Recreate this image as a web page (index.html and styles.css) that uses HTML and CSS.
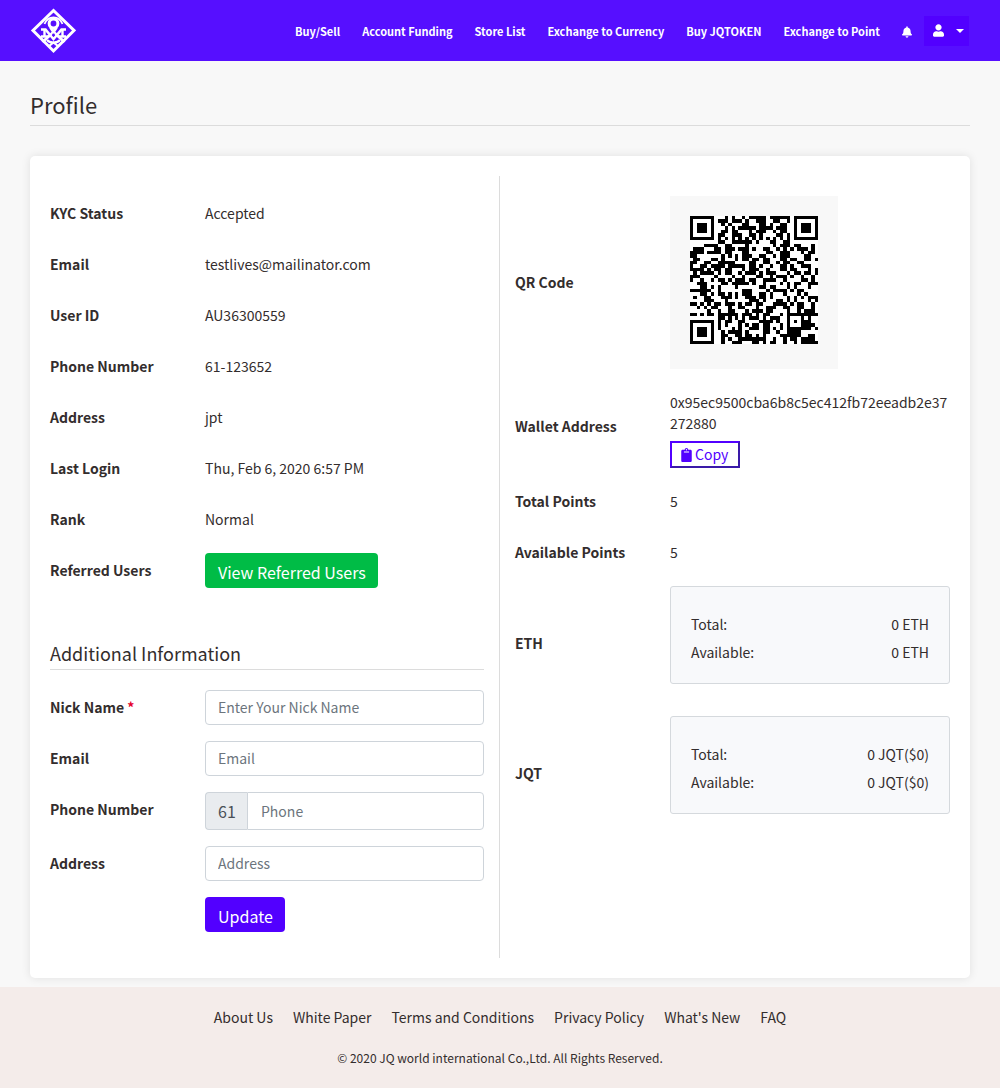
FILE: index.html
```html
<!DOCTYPE html>
<html lang="en">
<head>
<meta charset="utf-8">
<title>Profile</title>
<link rel="stylesheet" href="styles.css">
</head>
<body>
<header class="topbar">
  <a class="logo" aria-label="Home">
    <svg width="46" height="46" viewBox="0 0 46 46" fill="none" stroke="#fff">
      <path d="M23.500 2.500 44 22.500 23.500 43 3 22.500Z" stroke-width="3"/>
      <circle cx="23.500" cy="15.500" r="4.400" stroke-width="3"/>
      <path d="M14.500 16Q17 9.500 23.500 9.500T32.500 16" stroke-width="1.800"/>
      <path d="M20.500 19.500 23.500 24 34.500 34M26.500 19.500 23.500 24 12.500 34" stroke-width="2.800"/>
      <path d="M11 21.500H15.500L23.500 31 31.500 21.500H36" stroke-width="2.600"/>
      <path d="M14.500 21V29M32.500 21V29M11 28.500H19M28 28.500H36" stroke-width="2.400"/>
      <path d="M17 32Q19 34.500 23.500 34.500T30 32M18.500 38.500 23.500 34.500 28.500 38.500" stroke-width="2.200"/>
      <circle cx="23.500" cy="27" r="1.400" fill="#560fff" stroke="none"/>
    </svg>
  </a>
  <nav class="nav">
    <a>Buy/Sell</a><a>Account Funding</a><a>Store List</a><a>Exchange to Currency</a><a>Buy JQTOKEN</a><a>Exchange to Point</a>
    <a class="bell"><svg width="10" height="12" viewBox="0 0 448 512" fill="#fff"><path d="M224 512c35.320 0 63.970-28.650 63.970-64H160.030c0 35.350 28.650 64 63.970 64zm215.390-149.710c-19.320-20.760-55.470-51.990-55.470-154.290 0-77.700-54.480-139.900-127.940-155.160V32c0-17.670-14.320-32-31.980-32s-31.980 14.330-31.980 32v20.840C118.560 68.100 64.080 130.300 64.080 208c0 102.300-36.150 133.530-55.470 154.290-6 6.450-8.660 14.160-8.610 21.710.110 16.400 12.980 32 32.100 32h383.800c19.120 0 32-15.600 32.100-32 .050-7.550-2.610-15.270-8.610-21.710z"/></svg></a>
  </nav>
  <button class="user-menu" aria-label="Account">
    <svg width="11" height="13" viewBox="0 0 448 512" fill="#fff"><path d="M224 256c70.700 0 128-57.300 128-128S294.700 0 224 0 96 57.300 96 128s57.300 128 128 128zm89.600 32h-16.700c-22.200 10.200-46.900 16-72.900 16s-50.600-5.800-72.900-16h-16.700C60.200 288 0 348.200 0 422.400V464c0 26.500 21.500 48 48 48h352c26.500 0 48-21.500 48-48v-41.600c0-74.200-60.200-134.400-134.400-134.400z"/></svg>
    <span class="caret"></span>
  </button>
</header>

<main class="page">
  <h1 class="page-title">Profile</h1>
  <section class="card">
    <div class="col col-left">
      <div class="row"><b>KYC Status</b><span>Accepted</span></div>
      <div class="row"><b>Email</b><span>testlives@mailinator.com</span></div>
      <div class="row"><b>User ID</b><span>AU36300559</span></div>
      <div class="row"><b>Phone Number</b><span>61-123652</span></div>
      <div class="row"><b>Address</b><span>jpt</span></div>
      <div class="row"><b>Last Login</b><span>Thu, Feb 6, 2020 6:57 PM</span></div>
      <div class="row"><b>Rank</b><span>Normal</span></div>
      <div class="row"><b>Referred Users</b><span><button class="btn btn-green">View Referred Users</button></span></div>

      <h2 class="section-title">Additional Information</h2>
      <form>
        <div class="row"><b>Nick Name <i class="required">*</i></b><input class="field" placeholder="Enter Your Nick Name"></div>
        <div class="row"><b>Email</b><input class="field" placeholder="Email"></div>
        <div class="row row-phone"><b>Phone Number</b><div class="group"><span class="addon">61</span><input class="field" placeholder="Phone"></div></div>
        <div class="row"><b>Address</b><input class="field" placeholder="Address"></div>
        <div class="row"><b></b><span><button type="button" class="btn btn-primary">Update</button></span></div>
      </form>
    </div>

    <div class="col col-right">
      <div class="row"><b>QR Code</b><div><div class="qr"><svg id="qr" width="128" height="128" viewBox="0 0 128 128"></svg></div></div></div>
      <div class="row"><b>Wallet Address</b>
        <div class="wallet">
          <div id="wallet-address">0x95ec9500cba6b8c5ec412fb72eeadb2e37272880</div>
          <button class="copy"><svg width="11" height="14" viewBox="0 0 384 512" fill="#5200ff"><path d="M384 112v352c0 26.510-21.490 48-48 48H48c-26.510 0-48-21.490-48-48V112c0-26.510 21.490-48 48-48h80c0-35.290 28.710-64 64-64s64 28.710 64 64h80c26.510 0 48 21.490 48 48zM192 40c-13.255 0-24 10.745-24 24s10.745 24 24 24 24-10.745 24-24-10.745-24-24-24m96 114v-20a6 6 0 0 0-6-6H102a6 6 0 0 0-6 6v20a6 6 0 0 0 6 6h180a6 6 0 0 0 6-6z"/></svg><span>Copy</span></button>
        </div>
      </div>
      <div class="row"><b>Total Points</b><span>5</span></div>
      <div class="row"><b>Available Points</b><span>5</span></div>
      <div class="row"><b>ETH</b><div class="balance"><p><span>Total:</span><span>0 ETH</span></p><p><span>Available:</span><span>0 ETH</span></p></div></div>
      <div class="row"><b>JQT</b><div class="balance"><p><span>Total:</span><span>0 JQT($0)</span></p><p><span>Available:</span><span>0 JQT($0)</span></p></div></div>
    </div>
  </section>
</main>

<footer class="footer">
  <nav class="footer-links"><a>About Us</a><a>White Paper</a><a>Terms and Conditions</a><a>Privacy Policy</a><a>What's New</a><a>FAQ</a></nav>
  <p class="copyright">© 2020 JQ world international Co.,Ltd. All Rights Reserved.</p>
</footer>
<script src="qr.js"></script>
</body>
</html>
```
FILE: styles.css
```css
* { box-sizing: border-box; }
body {
  margin: 0;
  background: #f8f8f8;
  color: #332d2d;
  font: 14px/21px "Noto Sans CJK KR", "Noto Sans", sans-serif;
}
button, input { font-family: inherit; margin: 0; }
h1, h2, p { margin: 0; font-weight: 400; }

.topbar {
  display: flex;
  align-items: center;
  height: 61px;
  padding: 0 31px 0 30px;
  background: #560fff;
}
.logo { display: flex; }
.nav { display: flex; gap: 22px; margin-left: auto; padding-top: 1px; }
.nav a { color: #fff; font-size: 11px; font-weight: 700; line-height: 20px; }
.nav .bell { display: flex; align-items: center; padding-top: 1px; }
.user-menu {
  display: flex;
  align-items: center;
  justify-content: space-between;
  width: 45px;
  height: 30px;
  margin-left: 12px;
  padding: 0 5px 0 9px;
  border: 0;
  background: #5200ff;
}
.caret { border: 4px solid transparent; border-top-color: #fff; border-bottom: 0; }

.page { padding: 30px 30px 9px; }
.page-title {
  height: 35px;
  margin-bottom: 30px;
  border-bottom: 1px solid #dcdcdc;
  font-size: 22px;
  line-height: 26px;
}
.card {
  display: flex;
  height: 822px;
  padding: 20px;
  border-radius: 5px;
  background: #fff;
  box-shadow: 0 0 10px rgba(0, 0, 0, .1);
}
.col { width: 450px; padding-top: 20px; }
.col-left { padding-right: 15px; border-right: 1px solid #dcdcdc; }
.col-right { padding-left: 15px; }
.row {
  display: grid;
  grid-template-columns: 155px minmax(0, 1fr);
  align-items: center;
  min-height: 35px;
  margin-bottom: 16px;
}
.row b { font-weight: 700; }
.required { color: #e5002b; font-style: normal; }

.btn {
  display: block;
  height: 35px;
  padding: 3px 0 0 13px;
  border: 0;
  border-radius: 4px;
  color: #fff;
  font-size: 16px;
  line-height: 24px;
  text-align: left;
  white-space: nowrap;
}
.btn-green { width: 173px; background: #00bc46; }
.btn-primary { width: 80px; background: #5200ff; }

.section-title {
  height: 31px;
  margin: 51px 0 20px;
  border-bottom: 1px solid #dcdcdc;
  font-size: 18px;
  line-height: 28px;
}
.field {
  width: 100%;
  height: 35px;
  padding: 0 12px 2px;
  border: 1px solid #ced4da;
  border-radius: 4px;
  background: #fff;
  color: #495057;
  font-size: 14px;
}
.field::placeholder { color: #6c757d; }
.row-phone { align-items: start; }
.row-phone > b { line-height: 35px; }
.group { display: flex; height: 38px; }
.addon {
  flex: 0 0 42px;
  padding-left: 12px;
  border: 1px solid #ced4da;
  border-right: 0;
  border-radius: 4px 0 0 4px;
  background: #e9ecef;
  color: #495057;
  font-size: 16px;
  line-height: 36px;
}
.group .field {
  flex: 1;
  height: 38px;
  min-width: 0;
  padding: 0 13px;
  border-radius: 0 4px 4px 0;
}

.qr { width: 168px; height: 173px; padding: 20px; background: #f8f8f8; }
.qr svg { display: block; background: #fff; }
.wallet { padding-top: 7px; overflow-wrap: anywhere; }
.copy {
  display: flex;
  align-items: center;
  gap: 3px;
  width: 70px;
  height: 27px;
  margin-top: 7px;
  padding: 0 9px;
  border: 2px solid;
  border-color: #5200ff #3a1aa8 #3a1aa8 #5200ff;
  background: #fff;
  color: #5200ff;
  font-size: 14px;
}
.copy span { padding-bottom: 2px; }
.balance {
  height: 98px;
  margin-bottom: 16px;
  padding: 20px;
  border: 1px solid #d5d9dd;
  border-radius: 3px;
  background: #f8f9fb;
}
.balance p { display: flex; justify-content: space-between; padding-top: 7px; }

.footer { height: 101px; padding-top: 20px; background: #f4ecea; text-align: center; }
.footer-links { display: flex; justify-content: center; gap: 20px; }
.copyright { margin-top: 19px; font-size: 12px; }
```
FILE: qr.js
```js
// QR encoder for a 42 character wallet address: version 5, level H.
const N = 37;
const BLOCKS = [11, 11, 12, 12];
const EC = 22;

const EXP = [], LOG = [];
for (let i = 0, x = 1; i < 255; i++) {
  EXP[i] = x;
  LOG[x] = i;
  x <<= 1;
  if (x > 255) x ^= 0x11d;
}
const mul = (a, b) => (a && b ? EXP[(LOG[a] + LOG[b]) % 255] : 0);

function errorWords(data) {
  let gen = [1];
  for (let i = 0; i < EC; i++) {
    const next = new Array(gen.length + 1).fill(0);
    gen.forEach((c, j) => {
      next[j] ^= c;
      next[j + 1] ^= mul(c, EXP[i]);
    });
    gen = next;
  }
  const rest = data.concat(new Array(EC).fill(0));
  for (let i = 0; i < data.length; i++) {
    const f = rest[i];
    gen.forEach((c, j) => { rest[i + j] ^= mul(c, f); });
  }
  return rest.slice(data.length);
}

function codewords(text) {
  let bits = '0100' + text.length.toString(2).padStart(8, '0');
  for (const ch of text) bits += ch.charCodeAt(0).toString(2).padStart(8, '0');
  bits += '0000';
  const words = bits.match(/.{8}/g).map(b => parseInt(b, 2));
  for (let i = 0; words.length < 46; i++) words.push(i % 2 ? 0x11 : 0xec);
  let at = 0;
  const data = BLOCKS.map(n => words.slice(at, at += n));
  const ec = data.map(errorWords);
  const out = [];
  for (let i = 0; i < 12; i++) data.forEach(b => { if (i < b.length) out.push(b[i]); });
  for (let i = 0; i < EC; i++) ec.forEach(b => out.push(b[i]));
  return out;
}

const MASKS = [
  (i, j) => (i + j) % 2 === 0,
  (i, j) => i % 2 === 0,
  (i, j) => j % 3 === 0,
  (i, j) => (i + j) % 3 === 0,
  (i, j) => (Math.floor(i / 2) + Math.floor(j / 3)) % 2 === 0,
  (i, j) => (i * j) % 2 + (i * j) % 3 === 0,
  (i, j) => ((i * j) % 2 + (i * j) % 3) % 2 === 0,
  (i, j) => ((i * j) % 3 + (i + j) % 2) % 2 === 0
];

function build(words, mask, test) {
  const m = Array.from({ length: N }, () => new Array(N).fill(null));
  for (const [r0, c0] of [[0, 0], [N - 7, 0], [0, N - 7]]) {
    for (let r = -1; r < 8; r++) for (let c = -1; c < 8; c++) {
      if (!m[r0 + r] || c0 + c < 0 || c0 + c >= N) continue;
      const d = Math.max(Math.abs(r - 3), Math.abs(c - 3));
      m[r0 + r][c0 + c] = d < 2 || d === 3;
    }
  }
  for (let r = -2; r < 3; r++) for (let c = -2; c < 3; c++) {
    m[30 + r][30 + c] = Math.max(Math.abs(r), Math.abs(c)) !== 1;
  }
  for (let i = 8; i < N - 8; i++) m[6][i] = m[i][6] = i % 2 === 0;

  const info = (2 << 3) | mask;
  let rem = info << 10;
  for (let i = 14; i >= 10; i--) if (rem >> i & 1) rem ^= 0x537 << (i - 10);
  const format = ((info << 10) | rem) ^ 0x5412;
  for (let i = 0; i < 15; i++) {
    const on = !test && (format >> i & 1) === 1;
    m[i < 6 ? i : i < 8 ? i + 1 : N - 15 + i][8] = on;
    m[8][i < 8 ? N - 1 - i : i < 9 ? 7 : 14 - i] = on;
  }
  m[N - 8][8] = !test;

  let k = 0, up = true;
  for (let col = N - 1; col > 0; col -= 2) {
    if (col === 6) col--;
    for (let n = 0; n < N; n++) {
      const r = up ? N - 1 - n : n;
      for (const c of [col, col - 1]) {
        if (m[r][c] !== null) continue;
        const bit = k >> 3 < words.length && (words[k >> 3] >> (7 - k % 8) & 1) === 1;
        m[r][c] = bit !== MASKS[mask](r, c);
        k++;
      }
    }
    up = !up;
  }
  return m;
}

function penalty(m) {
  let lost = 0, dark = 0;
  for (let r = 0; r < N; r++) for (let c = 0; c < N; c++) {
    let same = 0;
    for (let a = -1; a < 2; a++) for (let b = -1; b < 2; b++) {
      if ((a || b) && m[r + a] && m[r + a][c + b] === m[r][c]) same++;
    }
    if (same > 5) lost += same - 2;
    if (r < N - 1 && c < N - 1) {
      const s = m[r][c] + m[r + 1][c] + m[r][c + 1] + m[r + 1][c + 1];
      if (s === 0 || s === 4) lost += 3;
    }
    const p = [1, 0, 1, 1, 1, 0, 1];
    if (c < N - 6 && p.every((v, i) => +m[r][c + i] === v)) lost += 40;
    if (r < N - 6 && p.every((v, i) => +m[r + i][c] === v)) lost += 40;
    if (m[r][c]) dark++;
  }
  return lost + Math.abs(100 * dark / N / N - 50) / 5 * 10;
}

const words = codewords(document.getElementById('wallet-address').textContent);
let best = 0, low = Infinity;
for (let mask = 0; mask < 8; mask++) {
  const p = penalty(build(words, mask, true));
  if (p < low) { low = p; best = mask; }
}
const edge = i => Math.round(i * 128 / N);
let d = '';
build(words, best, false).forEach((row, r) => row.forEach((on, c) => {
  if (on) d += `M${edge(c)} ${edge(r)}H${edge(c + 1)}V${edge(r + 1)}H${edge(c)}Z`;
}));
const path = document.createElementNS('http://www.w3.org/2000/svg', 'path');
path.setAttribute('d', d);
path.setAttribute('shape-rendering', 'crispEdges');
document.getElementById('qr').append(path);
```
